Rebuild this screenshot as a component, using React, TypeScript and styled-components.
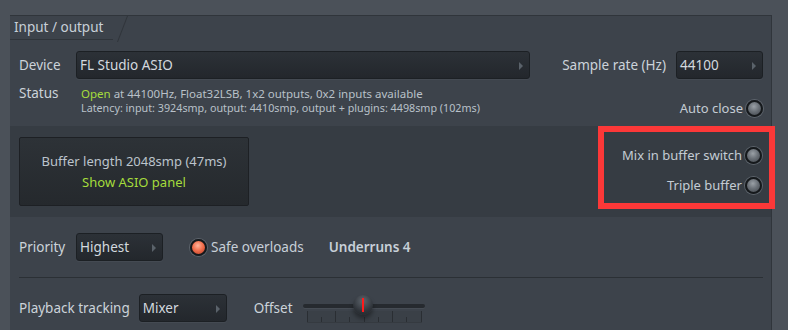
import React from 'react'
import { createGlobalStyle, styled } from 'styled-components'

const GlobalStyle = createGlobalStyle`
  html, body {
    margin: 0;
    padding: 0;
    background: #4b5159;
    overflow: hidden;
  }
  body {
    width: 788px;
    height: 330px;
    font-family: 'Noto Sans', 'Open Sans', sans-serif;
    font-size: 13px;
    color: #ccd3da;
  }
`;

export default function App() {
  return (
    <>
      <GlobalStyle />
      <Panel>
        <TabBar>
          <Tab>Input / output</Tab>
        </TabBar>

        <Section>
          <Row>
            <Label>Device</Label>
            <Select $width={454}>FL Studio ASIO</Select>
            <Spacer />
            <Label $gap={10}>Sample rate (Hz)</Label>
            <Select $width={87}>44100</Select>
          </Row>
          <StatusRow>
            <Label>Status</Label>
            <StatusText>
              <div><Green>Open</Green> at 44100Hz, Float32LSB, 1x2 outputs, 0x2 inputs available</div>
              <Small>Latency: input: 3924smp, output: 4410smp, output + plugins: 4498smp (102ms)</Small>
            </StatusText>
            <Spacer />
            <Check $top={15}>Auto close <Radio /></Check>
          </StatusRow>
        </Section>

        <Band>
          <BufferBox>
            <div>Buffer length 2048smp (47ms)</div>
            <Green>Show ASIO panel</Green>
          </BufferBox>
          <Spacer />
          <Checks>
            <Check>Mix in buffer switch <Radio /></Check>
            <Check>Triple buffer <Radio /></Check>
          </Checks>
          <Highlight />
        </Band>

        <Section>
          <Row $top={16}>
            <Label>Priority</Label>
            <Select $width={87}>Highest</Select>
            <Option>
              <Radio $on />Safe overloads
            </Option>
            <Underruns>Underruns 4</Underruns>
          </Row>
          <Divider />
          <Row $top={0}>
            <Label $gap={9}>Playback tracking</Label>
            <Select $width={88}>Mixer</Select>
            <Label $gap={10} style={{ marginLeft: 27 }}>Offset</Label>
            <Slider>
              <Track />
              <Ruler>
                {Array.from({ length: 9 }).map((_, i) => (
                  <Tick key={i} $tall={i % 2 === 0 && i !== 4} />
                ))}
              </Ruler>
              <Knob style={{ left: 50 }} />
            </Slider>
          </Row>
        </Section>
      </Panel>
    </>
  );
}

/* Styled Components */
const Panel = styled.div`
  margin: 15px 0 0 10px;
  width: 761px;
  height: 330px;
  background: #3d434b;
  border-top: 1px solid #30353b;
  border-right: 1px solid #30353b;
  display: flex;
  flex-direction: column;
`;

const TabBar = styled.div`
  height: 24px;
  display: flex;
`;

const Tab = styled.div`
  position: relative;
  width: 99px;
  padding-left: 4px;
  line-height: 23px;
  font-size: 13.5px;
  color: #c8d0d8;
  border-bottom: 1px solid #30353b;

  &::after {
    content: '';
    position: absolute;
    right: -5px;
    top: 0;
    width: 1px;
    height: 26px;
    background: #30353b;
    transform: skewX(-21deg);
    transform-origin: bottom left;
  }
`;

const Section = styled.div`
  padding: 0 8px 0 9px;
`;

const Row = styled.div<{ $top?: number }>`
  display: flex;
  align-items: center;
  height: 28px;
  margin-top: ${(p) => (p.$top ?? 11)}px;
`;

const StatusRow = styled.div`
  display: flex;
  align-items: flex-start;
  margin-top: 5px;
  height: 42px;
`;

const Label = styled.div<{ $gap?: number }>`
  width: ${(p) => (p.$gap ? 'auto' : '57px')};
  margin-right: ${(p) => p.$gap ?? 0}px;
  font-size: 13.5px;
  color: #ccd3da;
  white-space: nowrap;
`;

const Spacer = styled.div`
  flex: 1;
`;

const Select = styled.div<{ $width: number }>`
  position: relative;
  box-sizing: border-box;
  width: ${(p) => p.$width}px;
  height: 28px;
  line-height: 26px;
  padding-left: 3px;
  font-size: 13.5px;
  color: #d3d9df;
  background: linear-gradient(#2c3137, #23272c);
  border: 1px solid #1c2024;
  border-radius: 3px;
  box-shadow: 0 1px 0 rgba(255, 255, 255, 0.04);

  &::after {
    content: '';
    position: absolute;
    right: 6px;
    top: 10px;
    border-left: 4px solid #5a626a;
    border-top: 4px solid transparent;
    border-bottom: 4px solid transparent;
  }
`;

const StatusText = styled.div`
  margin-left: 5px;
  padding-top: 2px;
  font-size: 11.5px;
  line-height: 15px;
  color: #b9c1c9;
`;

const Small = styled.div`
  font-size: 10.75px;
`;

const Green = styled.span`
  color: #a5dc3c;
`;

const Check = styled.div<{ $top?: number }>`
  display: flex;
  align-items: center;
  gap: 3px;
  margin-top: ${(p) => p.$top ?? 0}px;
  font-size: 13px;
  color: #c4ccd4;
  white-space: nowrap;
`;

const Radio = styled.span<{ $on?: boolean }>`
  display: inline-block;
  box-sizing: border-box;
  width: 17px;
  height: 17px;
  border-radius: 50%;
  border: 2px solid #16191c;
  box-shadow: 0 0 0 1px #5c636b;
  background: ${(p) =>
    p.$on
      ? 'radial-gradient(circle at 45% 35%, #ffb49c 0%, #f3704e 45%, #b63a22 100%)'
      : 'radial-gradient(circle at 45% 35%, #9aa0a6 0%, #6b7178 45%, #3e4349 100%)'};
`;

const Band = styled.div`
  position: relative;
  height: 91px;
  background: #363c43;
  display: flex;
  align-items: flex-start;
  padding: 11px 9px 0 9px;
  box-sizing: border-box;
`;

const BufferBox = styled.div`
  box-sizing: border-box;
  width: 230px;
  height: 69px;
  background: linear-gradient(#2d3237, #25292d);
  border: 1px solid #1d2024;
  border-radius: 2px;
  display: flex;
  flex-direction: column;
  align-items: center;
  justify-content: center;
  gap: 3px;
  font-size: 13px;
  color: #bcc4cc;
`;

const Checks = styled.div`
  display: flex;
  flex-direction: column;
  align-items: flex-end;
  gap: 12px;
  padding-top: 9px;
`;

const Highlight = styled.div`
  position: absolute;
  left: 588px;
  top: 0;
  width: 177px;
  height: 83px;
  box-sizing: border-box;
  border: 6px solid #fc3838;
`;

const Option = styled.div`
  display: flex;
  align-items: center;
  gap: 4px;
  margin-left: 27px;
  font-size: 13.5px;
  color: #c8d0d8;
`;

const Underruns = styled.div`
  margin-left: 25px;
  font-size: 13.5px;
  font-weight: 600;
  color: #c8d0d8;
`;

const Divider = styled.div`
  height: 1px;
  margin: 16px 0 16px 0;
  background: #2b3035;
`;

const Slider = styled.div`
  position: relative;
  width: 122px;
  height: 28px;
`;

const Track = styled.div`
  margin-top: 10px;
  height: 4px;
  border-radius: 2px;
  background: #262a2f;
  box-shadow: 0 1px 0 rgba(255, 255, 255, 0.05);
`;

const Ruler = styled.div`
  display: flex;
  justify-content: space-between;
  align-items: flex-end;
  margin: 3px 3px 0 4px;
  height: 11px;
  border-bottom: 1px solid #353a40;
  background: #3a4047;
`;

const Tick = styled.div<{ $tall: boolean }>`
  width: 1px;
  height: ${(p) => (p.$tall ? 11 : 5)}px;
  background: #2a2e33;
`;

const Knob = styled.div`
  position: absolute;
  top: 1px;
  width: 20px;
  height: 20px;
  border-radius: 50%;
  background: radial-gradient(circle at 50% 30%, #5e656d 0%, #30353b 60%, #1f2226 100%);
  box-shadow: 0 4px 4px rgba(0, 0, 0, 0.35);

  &::after {
    content: '';
    position: absolute;
    left: 9px;
    top: 3px;
    width: 2px;
    height: 14px;
    background: #ff1a1a;
  }
`;
